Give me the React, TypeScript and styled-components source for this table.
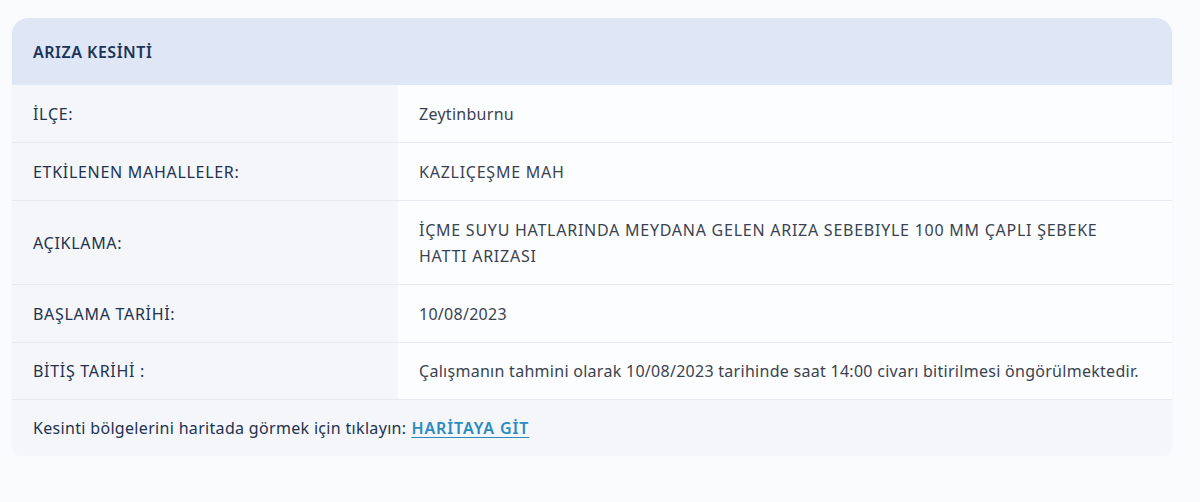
import styled, { createGlobalStyle } from 'styled-components';

const GlobalStyle = createGlobalStyle`
  html, body {
    margin: 0;
    background: #fafbfd;
  }
  body {
    font-family: "Noto Sans", Lato, sans-serif;
  }
`;

const Page = styled.div`
  padding: 18px 28px 0 12px;
`;

const Card = styled.div`
  width: 1160px;
  border-radius: 16px 16px 10px 10px;
  overflow: hidden;
  background: #fcfdfe;
  box-shadow: 0 1px 3px rgba(30, 50, 90, 0.04);
`;

const Header = styled.div`
  height: 67px;
  display: flex;
  align-items: center;
  padding-left: 21px;
  background: #dfe7f6;
  color: #1d3357;
  font-size: 16px;
  font-weight: 600;
  letter-spacing: 0.5px;
`;

const Row = styled.div<{ $h: number }>`
  display: grid;
  grid-template-columns: 386px 1fr;
  min-height: ${(p) => p.$h}px;
  border-bottom: 1px solid #e6e9ef;
`;

const Label = styled.div`
  display: flex;
  align-items: center;
  padding-left: 21px;
  background: #f4f6fa;
  color: #22324f;
  font-size: 16px;
  letter-spacing: 0.7px;
`;

const Value = styled.div<{ $caps?: boolean }>`
  display: flex;
  align-items: center;
  padding: 0 27px 0 21px;
  background: #fcfdfe;
  color: #3a4250;
  font-size: 16px;
  line-height: 26px;
  letter-spacing: ${(p) => (p.$caps ? '0.75px' : '0.28px')};
`;

const Footer = styled.div`
  height: 56px;
  display: flex;
  align-items: center;
  padding-left: 21px;
  background: #f4f6fa;
  color: #22324f;
  font-size: 16px;
  letter-spacing: 0.32px;
`;

const MapLink = styled.a`
  margin-left: 5px;
  color: #2b8bc0;
  font-weight: 600;
  letter-spacing: 0.9px;
  text-decoration: underline;
  text-underline-offset: 3px;
`;

const rows: { label: string; value: string; h: number; caps?: boolean }[] = [
  { label: 'İLÇE:', value: 'Zeytinburnu', h: 57 },
  { label: 'ETKİLENEN MAHALLELER:', value: 'KAZLIÇEŞME MAH', h: 57, caps: true },
  {
    label: 'AÇIKLAMA:',
    value:
      'İÇME SUYU HATLARINDA MEYDANA GELEN ARIZA SEBEBIYLE 100 MM ÇAPLI ŞEBEKE HATTI ARIZASI',
    h: 83,
    caps: true,
  },
  { label: 'BAŞLAMA TARİHİ:', value: '10/08/2023', h: 57 },
  {
    label: 'BİTİŞ TARİHİ :',
    value:
      'Çalışmanın tahmini olarak 10/08/2023 tarihinde saat 14:00 civarı bitirilmesi öngörülmektedir.',
    h: 56,
  },
];

export default function App() {
  return (
    <Page>
      <GlobalStyle />
      <Card>
        <Header>ARIZA KESİNTİ</Header>
        {rows.map((r) => (
          <Row key={r.label} $h={r.h}>
            <Label>{r.label}</Label>
            <Value $caps={r.caps}>{r.value}</Value>
          </Row>
        ))}
        <Footer>
          Kesinti bölgelerini haritada görmek için tıklayın:
          <MapLink href="#">HARİTAYA GİT</MapLink>
        </Footer>
      </Card>
    </Page>
  );
}
